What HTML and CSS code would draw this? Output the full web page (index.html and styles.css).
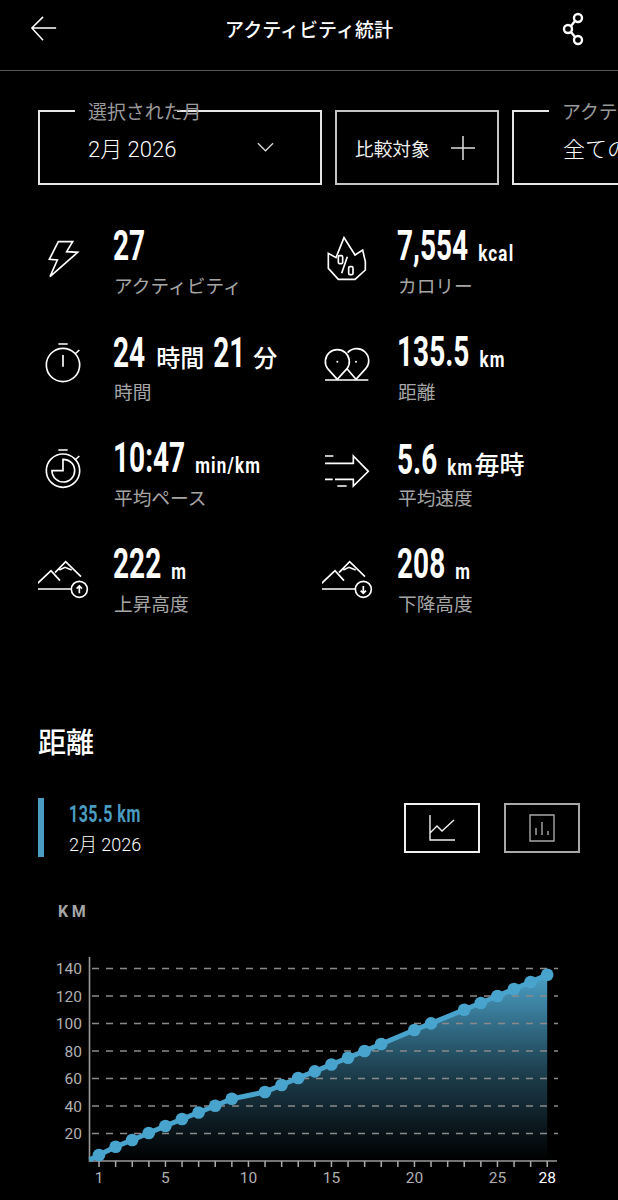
FILE: index.html
```html
<!DOCTYPE html>
<html lang="ja">
<head>
<meta charset="utf-8">
<title>アクティビティ統計</title>
<link rel="stylesheet" href="styles.css">
</head>
<body>
<header class="topbar">
  <svg class="back" viewBox="0 0 30 30"><path d="M28 14H2M14 2 2 14 14 27"/></svg>
  <h1 class="title">アクティビティ統計</h1>
  <svg class="share" viewBox="0 0 24 34"><circle cx="16" cy="6" r="4"/><circle cx="6" cy="17" r="4"/><circle cx="16" cy="28" r="4"/><path d="M13 9 9 14M9 20l4 5"/></svg>
</header>

<section class="filters">
  <div class="box box-month">
    <span class="notch"></span><span class="legend">選択された月</span>
    <span class="box-value">2月 2026</span>
    <svg class="chev" viewBox="0 0 18 10"><path d="M1 1l8 8 8-8"/></svg>
  </div>
  <div class="box box-compare">
    <span class="compare-text">比較対象</span>
    <svg class="plus" viewBox="0 0 24 24"><path d="M12 0v24M0 12h24"/></svg>
  </div>
  <div class="box box-activity">
    <span class="notch"></span><span class="legend">アクティビティ</span>
    <span class="box-value">全てのアクティビティ</span>
  </div>
</section>

<section class="stats">
  <div class="stat">
    <svg class="icon" viewBox="54 15 198 168"><path d="M115 65H158L140 95 173 97 90 170 112 120 88 118Z"/></svg>
    <div class="stat-text"><div class="value"><b class="num">27</b></div><div class="label">アクティビティ</div></div>
  </div>
  <div class="stat">
    <svg class="icon" viewBox="36 15 198 168"><path d="M85 178 55 145V100L78 113 102 53 135 105 158 90 166 125V150L135 178Z"/><rect x="85" y="107" width="13" height="24" rx="4"/><rect x="116" y="140" width="13" height="24" rx="4"/><path d="M112 110 95 160"/></svg>
    <div class="stat-text"><div class="value"><b class="num">7,554</b><b class="unit">kcal</b></div><div class="label">カロリー</div></div>
  </div>
  <div class="stat">
    <svg class="icon" viewBox="54 333 198 168"><circle cx="129" cy="435" r="50"/><path d="M115 372H143M165 402 178 390M129 405V440"/></svg>
    <div class="stat-text"><div class="value"><b class="num">24</b><span class="jp">時間</span><b class="num">21</b><span class="jp jp-last">分</span></div><div class="label">時間</div></div>
  </div>
  <div class="stat">
    <svg class="icon" viewBox="36 333 198 168"><path d="M82 478 53 446A36 36 0 1 1 111 446ZM138 478 167 446A36 36 0 1 0 113 398M138 478 111 446M45 480H175"/><circle class="dot" cx="82" cy="425" r="3"/><circle class="dot" cx="138" cy="425" r="3"/></svg>
    <div class="stat-text"><div class="value"><b class="num">135.5</b><b class="unit">km</b></div><div class="label">距離</div></div>
  </div>
  <div class="stat">
    <svg class="icon" viewBox="54 21 198 168"><circle cx="129" cy="122" r="50"/><path d="M115 60H143M165 90 178 78M129 88A34 34 0 1 1 96 122H129Z"/></svg>
    <div class="stat-text"><div class="value"><b class="num">10:47</b><b class="unit">min/km</b></div><div class="label">平均ペース</div></div>
  </div>
  <div class="stat">
    <svg class="icon" viewBox="36 21 198 168"><path d="M45 78H70M45 100H130V78L175 124 130 168V148H75M45 148H68M82 168H110"/></svg>
    <div class="stat-text"><div class="value"><b class="num">5.6</b><b class="unit">km</b><span class="jp jp-tight">毎時</span></div><div class="label">平均速度</div></div>
  </div>
  <div class="stat">
    <svg class="icon" viewBox="54 339 198 168"><path d="M53 460 93 422 120 452M105 428 137 395 183 440M118 420 135 412 155 420M53 477H154M178 490V468M170 476 178 468 186 476"/><circle cx="178" cy="478" r="24"/></svg>
    <div class="stat-text"><div class="value"><b class="num">222</b><b class="unit">m</b></div><div class="label">上昇高度</div></div>
  </div>
  <div class="stat">
    <svg class="icon" viewBox="36 339 198 168"><path d="M35 460 75 422 102 452M87 428 119 395 165 440M100 420 117 412 137 420M35 477H136M160 468V490M152 482 160 490 168 482"/><circle cx="160" cy="478" r="24"/></svg>
    <div class="stat-text"><div class="value"><b class="num">208</b><b class="unit">m</b></div><div class="label">下降高度</div></div>
  </div>
</section>

<section class="distance">
  <h2 class="heading">距離</h2>
  <div class="summary">
    <div class="legend-block">
      <b class="legend-value">135.5 km</b>
      <span class="legend-date">2月 2026</span>
    </div>
    <div class="toggles">
      <div class="toggle toggle-on"><svg class="toggle-icon" viewBox="0 0 26 28"><path d="M1 1V26H26M1 19 8 12 13 17 25 6"/></svg></div>
      <div class="toggle toggle-off"><svg class="toggle-icon" viewBox="0 0 26 28"><path d="M1 1H25V27H1ZM7 21V14M13 21V8M19 21V17"/></svg></div>
    </div>
  </div>
  <div class="km">KM</div>
</section>

<svg class="chart" viewBox="0 920 618 280">
  <defs>
    <linearGradient id="fade" x1="0" y1="0" x2="0" y2="1">
      <stop offset="0" stop-color="#4a9fc6"/>
      <stop offset=".5" stop-color="#4a9fc6" stop-opacity=".42"/>
      <stop offset="1" stop-color="#4a9fc6" stop-opacity="0"/>
    </linearGradient>
  </defs>
  <polygon fill="url(#fade)" points="89.5,1160 99,1155 115.6,1146.8 132.2,1140 148.8,1133 165.4,1126 182,1119 198.6,1112.5 215.2,1105.7 231.8,1098.8 265,1092 281.6,1085 298.2,1078 314.8,1071.4 331.4,1064.5 348,1057.7 364.6,1051 381.2,1044 414.4,1030 431,1023.4 464.2,1009.7 480.8,1003 497.4,996 514,989 530.6,982 547.2,974.7 547.2,1160"/>
  <g class="grid">
    <path d="M92 968.5H558M92 996H558M92 1023.5H558M92 1051H558M92 1078.5H558M92 1106H558M92 1133.5H558"/>
  </g>
  <path class="axis" d="M89.5 957V1161H557"/>
  <path class="ticks" d="M98.3 1164H549"/>
  <polyline class="line" points="89.5,1160 99,1155 115.6,1146.8 132.2,1140 148.8,1133 165.4,1126 182,1119 198.6,1112.5 215.2,1105.7 231.8,1098.8 265,1092 281.6,1085 298.2,1078 314.8,1071.4 331.4,1064.5 348,1057.7 364.6,1051 381.2,1044 414.4,1030 431,1023.4 464.2,1009.7 480.8,1003 497.4,996 514,989 530.6,982 547.2,974.7"/>
  <g class="points">
    <circle cx="99" cy="1155" r="6.3"/><circle cx="115.6" cy="1146.8" r="6.3"/><circle cx="132.2" cy="1140" r="6.3"/><circle cx="148.8" cy="1133" r="6.3"/><circle cx="165.4" cy="1126" r="6.3"/><circle cx="182" cy="1119" r="6.3"/><circle cx="198.6" cy="1112.5" r="6.3"/><circle cx="215.2" cy="1105.7" r="6.3"/><circle cx="231.8" cy="1098.8" r="6.3"/><circle cx="265" cy="1092" r="6.3"/><circle cx="281.6" cy="1085" r="6.3"/><circle cx="298.2" cy="1078" r="6.3"/><circle cx="314.8" cy="1071.4" r="6.3"/><circle cx="331.4" cy="1064.5" r="6.3"/><circle cx="348" cy="1057.7" r="6.3"/><circle cx="364.6" cy="1051" r="6.3"/><circle cx="381.2" cy="1044" r="6.3"/><circle cx="414.4" cy="1030" r="6.3"/><circle cx="431" cy="1023.4" r="6.3"/><circle cx="464.2" cy="1009.7" r="6.3"/><circle cx="480.8" cy="1003" r="6.3"/><circle cx="497.4" cy="996" r="6.3"/><circle cx="514" cy="989" r="6.3"/><circle cx="530.6" cy="982" r="6.3"/><circle cx="547.2" cy="974.7" r="6.3"/>
  </g>
  <g class="ylabels">
    <text x="82" y="974">140</text><text x="82" y="1001.5">120</text><text x="82" y="1029">100</text><text x="82" y="1056.5">80</text><text x="82" y="1084">60</text><text x="82" y="1111.5">40</text><text x="82" y="1138.5">20</text>
  </g>
  <g class="xlabels">
    <text x="99" y="1183">1</text><text x="165.4" y="1183">5</text><text x="248.4" y="1183">10</text><text x="331.4" y="1183">15</text><text x="414.4" y="1183">20</text><text x="497.4" y="1183">25</text><text class="xlabel-on" x="547.2" y="1183">28</text>
  </g>
</svg>
</body>
</html>
```

FILE: styles.css
```css
* { box-sizing: border-box; }
html, body { margin: 0; padding: 0; background: #000; }
body {
  width: 618px;
  height: 1200px;
  overflow: hidden;
  color: #fff;
  font-family: "Noto Sans CJK JP", "Noto Sans", sans-serif;
}

.topbar {
  height: 71px;
  border-bottom: 1px solid #555;
  display: flex;
  align-items: center;
  justify-content: space-between;
  padding: 0 32px 13px 30px;
}
.back { width: 28px; height: 28px; fill: none; stroke: #fff; stroke-width: 1.6; }
.title { margin: 0 0 0 -2px; font-size: 19px; line-height: 26px; font-weight: 500; }
.share { width: 24px; height: 34px; fill: none; stroke: #fff; stroke-width: 2.4; }

.filters {
  display: flex;
  gap: 13px;
  padding: 39px 0 0 38px;
  overflow: hidden;
}
.box {
  position: relative;
  flex: none;
  height: 75px;
  border: 2px solid #e6e6e6;
  display: flex;
  align-items: center;
}
.box-month { width: 284px; padding: 0 0 2px 48px; justify-content: space-between; }
.box-compare { width: 164px; padding: 0 22px 0 18px; justify-content: space-between; border-color: #c4c4c4; }
.box-activity { width: 400px; padding: 0 0 2px 49px; }
.notch { position: absolute; left: 35px; top: -2px; width: 102px; height: 2px; background: #000; }
.legend {
  position: absolute;
  left: 48px;
  top: -13px;
  font-size: 18.9px;
  line-height: 24px;
  color: #9a9a9a;
  white-space: nowrap;
}
.box-value { font-family: Roboto, "Noto Sans CJK JP", sans-serif; font-size: 22px; font-weight: 300; white-space: nowrap; }
.chev { width: 17px; height: 10px; margin-right: 46px; fill: none; stroke: #ddd; stroke-width: 1.3; }
.compare-text { font-size: 18.7px; font-weight: 400; color: #eee; }
.plus { width: 24px; height: 24px; fill: none; stroke: #ddd; stroke-width: 1.5; }

.stats {
  display: grid;
  grid-template-columns: 284px 284px;
  grid-auto-rows: 106px;
  padding: 40px 0 0 38px;
}
.stat { display: flex; }
.icon { flex: none; width: 66px; height: 56px; margin-right: 10px; fill: none; stroke: #fff; stroke-width: 5; }
.dot { fill: #fff; stroke: none; }
.stat-text { display: flex; flex-direction: column; }
.value { height: 44px; margin-left: -1px; padding-top: 13px; display: flex; align-items: baseline; white-space: nowrap; }
.num {
  display: inline-block;
  font-family: Roboto, sans-serif;
  font-size: 28px;
  line-height: 28px;
  font-weight: 700;
  transform: scaleY(1.55);
  transform-origin: 0 calc(100% - 4px);
}
.unit {
  display: inline-block;
  margin-left: 10px;
  font-family: Roboto, sans-serif;
  font-size: 17px;
  line-height: 20px;
  letter-spacing: 1.2px;
  font-weight: 700;
  transform: scaleY(1.33);
  transform-origin: 0 calc(100% - 4px);
}
.jp { font-size: 24px; line-height: 28px; font-weight: 500; margin: 0 9px 0 11px; transform: translateY(-1.5px); }
.jp-last { margin: 0 0 0 8px; }
.jp-tight { margin: 0 0 0 1px; font-size: 25px; }
.label { margin-top: 3px; font-size: 18.7px; line-height: 26px; color: #a6a6a6; white-space: nowrap; }

.distance { padding: 72px 38px 0; }
.heading { margin: 0; font-size: 28px; line-height: 40px; font-weight: 500; }
.summary { display: flex; justify-content: space-between; align-items: center; margin-top: 37px; }
.legend-block { border-left: 6px solid #4a9cc0; padding: 3px 0 0 25px; height: 59px; display: flex; flex-direction: column; align-items: flex-start; }
.legend-value { display: inline-block; font-family: Roboto, sans-serif; font-size: 16px; line-height: 28px; letter-spacing: .5px; color: #4a9cc0; font-weight: 700; white-space: nowrap; transform: scaleY(1.45); }
.legend-date { margin-top: 3px; font-family: Roboto, "Noto Sans CJK JP", sans-serif; font-size: 18px; line-height: 26px; font-weight: 300; white-space: nowrap; }
.toggles { display: flex; gap: 24px; }
.toggle { width: 76px; height: 50px; border: 2px solid; display: flex; align-items: center; justify-content: center; }
.toggle-on { border-color: #f0f0f0; color: #f0f0f0; }
.toggle-off { border-color: #a8a8a8; color: #a8a8a8; }
.toggle-icon { width: 26px; height: 28px; fill: none; stroke: currentColor; stroke-width: 1.4; }
.km { margin: 45px 0 0 20px; font-family: Roboto, sans-serif; font-size: 16px; line-height: 20px; font-weight: 700; letter-spacing: 3.5px; color: #a6a6a6; }

.chart { position: absolute; left: 0; top: 920px; width: 618px; height: 280px; }
.grid path { fill: none; stroke: #8a8a8a; stroke-width: 1.5; stroke-dasharray: 7 7; }
.axis { fill: none; stroke: #999; stroke-width: 1.6; }
.ticks { fill: none; stroke: #aaa; stroke-width: 6; stroke-dasharray: 1.5 15.1; }
.line { fill: none; stroke: #49a4cd; stroke-width: 5; }
.points circle { fill: #49a4cd; }
.ylabels text { font-family: Roboto, sans-serif; font-size: 15.5px; fill: #b0b0b0; text-anchor: end; }
.xlabels text { font-family: Roboto, sans-serif; font-size: 15.5px; fill: #b0b0b0; text-anchor: middle; }
.xlabels .xlabel-on { fill: #fff; }
```
